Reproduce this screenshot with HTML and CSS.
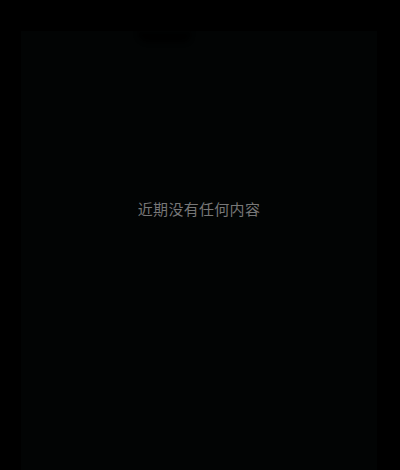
FILE: index.html
```html
<!DOCTYPE html>
<html lang="zh">
<head>
<meta charset="utf-8">
<link rel="stylesheet" href="styles.css">
</head>
<body>
<div class="panel">
  <div class="notch"></div>
  <p class="empty">近期没有任何内容</p>
</div>
</body>
</html>
```
FILE: styles.css
```css
html, body {
  margin: 0;
  padding: 0;
  background: #000;
  height: 100%;
  overflow: hidden;
}
.panel {
  position: relative;
  margin: 31px 23px 0 21px;
  height: 439px;
  background: #020404;
  display: flex;
  justify-content: center;
  padding-top: 168px;
  box-sizing: border-box;
}
.notch {
  position: absolute;
  top: 0;
  left: 116px;
  width: 54px;
  height: 12px;
  background: #000;
  border-radius: 0 0 20px 30px;
  filter: blur(2px);
  opacity: 0.8;
}
.empty {
  margin: 0;
  font-family: "Noto Sans CJK SC", "Noto Sans", sans-serif;
  font-size: 15px;
  line-height: 20px;
  letter-spacing: 0.3px;
  color: #777;
}
```
